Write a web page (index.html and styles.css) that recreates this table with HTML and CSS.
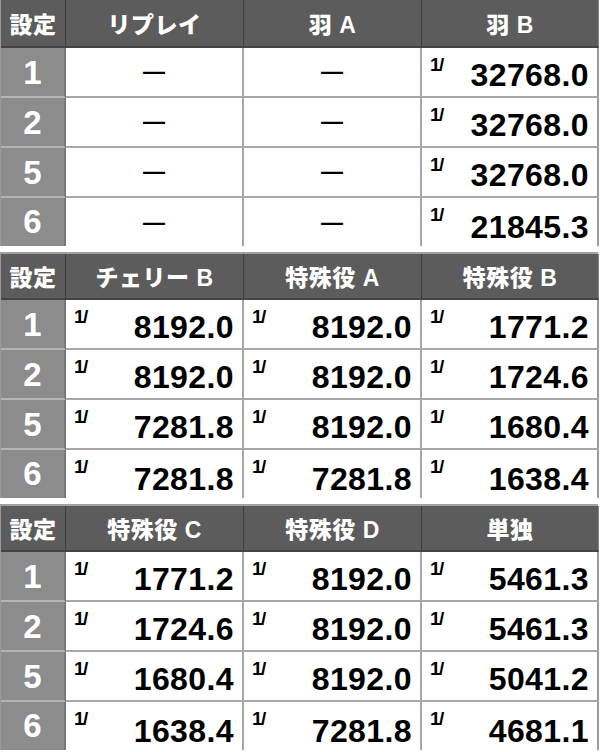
FILE: index.html
```html
<!DOCTYPE html>
<html lang="ja">
<head>
<meta charset="utf-8">
<link rel="stylesheet" href="styles.css">
</head>
<body>
<div class="page">
  <div class="tbl">
    <div class="h first">設定</div><div class="h">リプレイ</div><div class="h">羽 A</div><div class="h last">羽 B</div>
    <div class="s">1</div><div class="c dash"><span>—</span></div><div class="c dash"><span>—</span></div><div class="c v last"><span class="f">1/</span><span class="n">32768.0</span></div>
    <div class="s">2</div><div class="c dash"><span>—</span></div><div class="c dash"><span>—</span></div><div class="c v last"><span class="f">1/</span><span class="n">32768.0</span></div>
    <div class="s">5</div><div class="c dash"><span>—</span></div><div class="c dash"><span>—</span></div><div class="c v last"><span class="f">1/</span><span class="n">32768.0</span></div>
    <div class="s end">6</div><div class="c dash end"><span>—</span></div><div class="c dash end"><span>—</span></div><div class="c v last end"><span class="f">1/</span><span class="n">21845.3</span></div>
  </div>
  <div class="tbl">
    <div class="h first">設定</div><div class="h">チェリー B</div><div class="h">特殊役 A</div><div class="h last">特殊役 B</div>
    <div class="s">1</div><div class="c v"><span class="f">1/</span><span class="n">8192.0</span></div><div class="c v"><span class="f">1/</span><span class="n">8192.0</span></div><div class="c v last"><span class="f">1/</span><span class="n">1771.2</span></div>
    <div class="s">2</div><div class="c v"><span class="f">1/</span><span class="n">8192.0</span></div><div class="c v"><span class="f">1/</span><span class="n">8192.0</span></div><div class="c v last"><span class="f">1/</span><span class="n">1724.6</span></div>
    <div class="s">5</div><div class="c v"><span class="f">1/</span><span class="n">7281.8</span></div><div class="c v"><span class="f">1/</span><span class="n">8192.0</span></div><div class="c v last"><span class="f">1/</span><span class="n">1680.4</span></div>
    <div class="s end">6</div><div class="c v end"><span class="f">1/</span><span class="n">7281.8</span></div><div class="c v end"><span class="f">1/</span><span class="n">7281.8</span></div><div class="c v last end"><span class="f">1/</span><span class="n">1638.4</span></div>
  </div>
  <div class="tbl">
    <div class="h first">設定</div><div class="h">特殊役 C</div><div class="h">特殊役 D</div><div class="h last">単独</div>
    <div class="s">1</div><div class="c v"><span class="f">1/</span><span class="n">1771.2</span></div><div class="c v"><span class="f">1/</span><span class="n">8192.0</span></div><div class="c v last"><span class="f">1/</span><span class="n">5461.3</span></div>
    <div class="s">2</div><div class="c v"><span class="f">1/</span><span class="n">1724.6</span></div><div class="c v"><span class="f">1/</span><span class="n">8192.0</span></div><div class="c v last"><span class="f">1/</span><span class="n">5461.3</span></div>
    <div class="s">5</div><div class="c v"><span class="f">1/</span><span class="n">1680.4</span></div><div class="c v"><span class="f">1/</span><span class="n">8192.0</span></div><div class="c v last"><span class="f">1/</span><span class="n">5041.2</span></div>
    <div class="s end">6</div><div class="c v end"><span class="f">1/</span><span class="n">1638.4</span></div><div class="c v end"><span class="f">1/</span><span class="n">7281.8</span></div><div class="c v last end"><span class="f">1/</span><span class="n">4681.1</span></div>
  </div>
</div>
</body>
</html>
```

FILE: styles.css
```css
* { box-sizing: border-box; }
html, body { margin: 0; padding: 0; background: #ffffff; }
body {
  width: 600px;
  height: 752px;
  overflow: hidden;
  font-family: "Liberation Sans", "Noto Sans CJK JP", sans-serif;
  font-weight: bold;
}
.page {
  display: flex;
  flex-direction: column;
  gap: 6px;
  width: 598px;
}
.tbl {
  display: grid;
  grid-template-columns: 65px 178px 178px 177px;
  grid-template-rows: 46px 50px 50px 50px 48px;
  border-left: 1px solid #9a9a9a;
  border-top: 2px solid #a0a0a0;
}
.tbl:first-child { border-top: 0; grid-template-rows: 48px 50px 50px 50px 48px; }
.h {
  background: #5c5c5c;
  color: #ffffff;
  font-size: 23px;
  font-weight: 900;
  display: flex;
  align-items: center;
  justify-content: center;
  border-right: 1px solid #3e3e3e;
  border-bottom: 2px solid #444444;
  letter-spacing: 0.5px;
  padding-bottom: 1px;
}
.h.last { border-right: 1px solid #888888; }
.s {
  background: #8c8c8c;
  color: #ffffff;
  font-size: 33px;
  display: flex;
  align-items: center;
  justify-content: center;
  border-right: 2px solid #777777;
  border-bottom: 2px solid #b4b4b4;
  padding-top: 2px;
}
.c {
  background: #ffffff;
  border-right: 2px solid #a6a6a6;
  border-bottom: 2px solid #a6a6a6;
}
.c.last { border-right: 2px solid #9a9a9a; }
.end { border-bottom: 0; padding-top: 2px; }
.s.end { padding-top: 0; }
.dash {
  display: flex;
  align-items: center;
  justify-content: center;
  font-size: 22px;
  color: #000000;
  font-weight: bold;
}
.v {
  display: flex;
  justify-content: space-between;
  padding: 8px 8px 5px 8px;
  color: #000000;
}
.v.end { padding-top: 8px; padding-bottom: 3px; }
.f {
  align-self: flex-start;
  font-size: 19px;
  line-height: 18px;
  letter-spacing: -1.5px;
}
.n {
  align-self: flex-end;
  font-size: 32px;
  line-height: 32px;
  letter-spacing: 0.4px;
}
```
